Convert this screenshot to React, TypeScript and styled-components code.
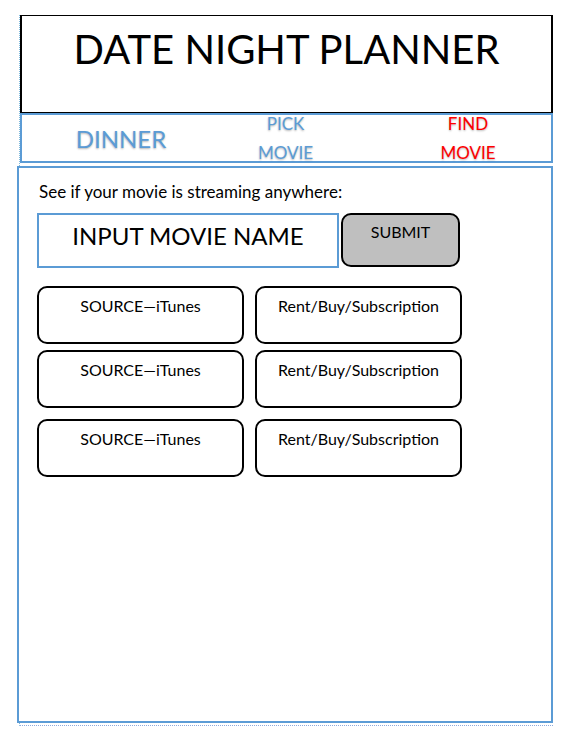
import React, { useState } from 'react';
import styled, { createGlobalStyle } from 'styled-components';

const BLUE = '#5b9bd5';

const GlobalStyle = createGlobalStyle`
  *, *::before, *::after { box-sizing: border-box; }
  body {
    margin: 0;
    background: #fff;
    color: #000;
    font-family: Lato, Carlito, Calibri, sans-serif;
    font-size: 16px;
    line-height: 20px;
  }
`;

const Page = styled.div`
  display: flex;
  flex-direction: column;
  min-height: 100vh;
  padding: 15px 11px 14px 19px;
`;

const Sheet = styled.div`
  flex: 1;
  display: flex;
  flex-direction: column;
  border-left: 1px dotted #7fb9dc;
  border-bottom: 1px dotted #8faadc;
  padding-bottom: 2px;
`;

const Header = styled.header`
  border: 2px solid #000;
  border-width: 1px 2px;
  padding: 8px 4px 38px;
  text-align: center;
`;

const Title = styled.h1`
  margin: 0;
  font-size: 40px;
  font-weight: 400;
  line-height: 50px;
`;

const Nav = styled.nav`
  display: grid;
  grid-template-columns: 130fr 199fr 166fr;
  grid-template-rows: 46px;
  align-items: center;
  border: 2px solid ${BLUE};
  padding-left: 34px;
`;

const NavLink = styled.a<{ $large?: boolean; $active?: boolean }>`
  justify-self: center;
  width: min-content;
  color: ${(p) => (p.$active ? '#f00' : BLUE)};
  font-size: ${(p) => (p.$large ? 24 : 17)}px;
  line-height: 29px;
  text-align: center;
  text-decoration: none;
  text-shadow: 0 1px 2px rgba(0, 0, 0, 0.3);
`;

const Main = styled.main`
  flex: 1;
  margin: 3px 0 0 -3px;
  border: 2px solid ${BLUE};
  padding: 14px 18px;
  background: #fff;
`;

const Prompt = styled.label`
  display: block;
  margin: 0 2px 11px;
  font-size: 17px;
`;

const SearchForm = styled.form`
  display: flex;
  gap: 2px;
  max-width: 423px;
  margin-bottom: 18px;
`;

const MovieInput = styled.input`
  flex: 1;
  min-width: 0;
  height: 55px;
  border: 2px solid ${BLUE};
  border-radius: 0;
  padding: 0 4px 10px;
  background: #fff;
  color: #000;
  font: inherit;
  font-size: 24px;
  text-align: center;
`;

const SubmitButton = styled.button`
  width: 119px;
  height: 54px;
  border: 2px solid #000;
  border-radius: 10px;
  padding: 0 0 16px;
  background: #bfbfbf;
  color: #000;
  font: inherit;
`;

const Results = styled.ul`
  display: flex;
  flex-direction: column;
  gap: 6px;
  max-width: 425px;
  margin: 0;
  padding: 0;
  list-style: none;
`;

const Result = styled.li`
  display: grid;
  grid-template-columns: 1fr 1fr;
  gap: 11px;

  &:last-child {
    margin-top: 5px;
  }
`;

const Card = styled.div`
  height: 58px;
  border: 2px solid #000;
  border-radius: 10px;
  padding-top: 8px;
  text-align: center;
`;

const results = [
  { id: 1, source: 'iTunes', offer: 'Rent/Buy/Subscription' },
  { id: 2, source: 'iTunes', offer: 'Rent/Buy/Subscription' },
  { id: 3, source: 'iTunes', offer: 'Rent/Buy/Subscription' },
];

export default function App() {
  const [movie, setMovie] = useState('INPUT MOVIE NAME');

  return (
    <>
      <GlobalStyle />
      <Page>
        <Sheet>
          <Header>
            <Title>DATE NIGHT PLANNER</Title>
          </Header>
          <Nav>
            <NavLink href="#dinner" $large>DINNER</NavLink>
            <NavLink href="#pick">PICK MOVIE</NavLink>
            <NavLink href="#find" $active aria-current="page">FIND MOVIE</NavLink>
          </Nav>
          <Main>
            <Prompt htmlFor="movie">See if your movie is streaming anywhere:</Prompt>
            <SearchForm onSubmit={(e) => e.preventDefault()}>
              <MovieInput id="movie" value={movie} onChange={(e) => setMovie(e.target.value)} />
              <SubmitButton type="submit">SUBMIT</SubmitButton>
            </SearchForm>
            <Results>
              {results.map((r) => (
                <Result key={r.id}>
                  <Card>SOURCE—{r.source}</Card>
                  <Card>{r.offer}</Card>
                </Result>
              ))}
            </Results>
          </Main>
        </Sheet>
      </Page>
    </>
  );
}
